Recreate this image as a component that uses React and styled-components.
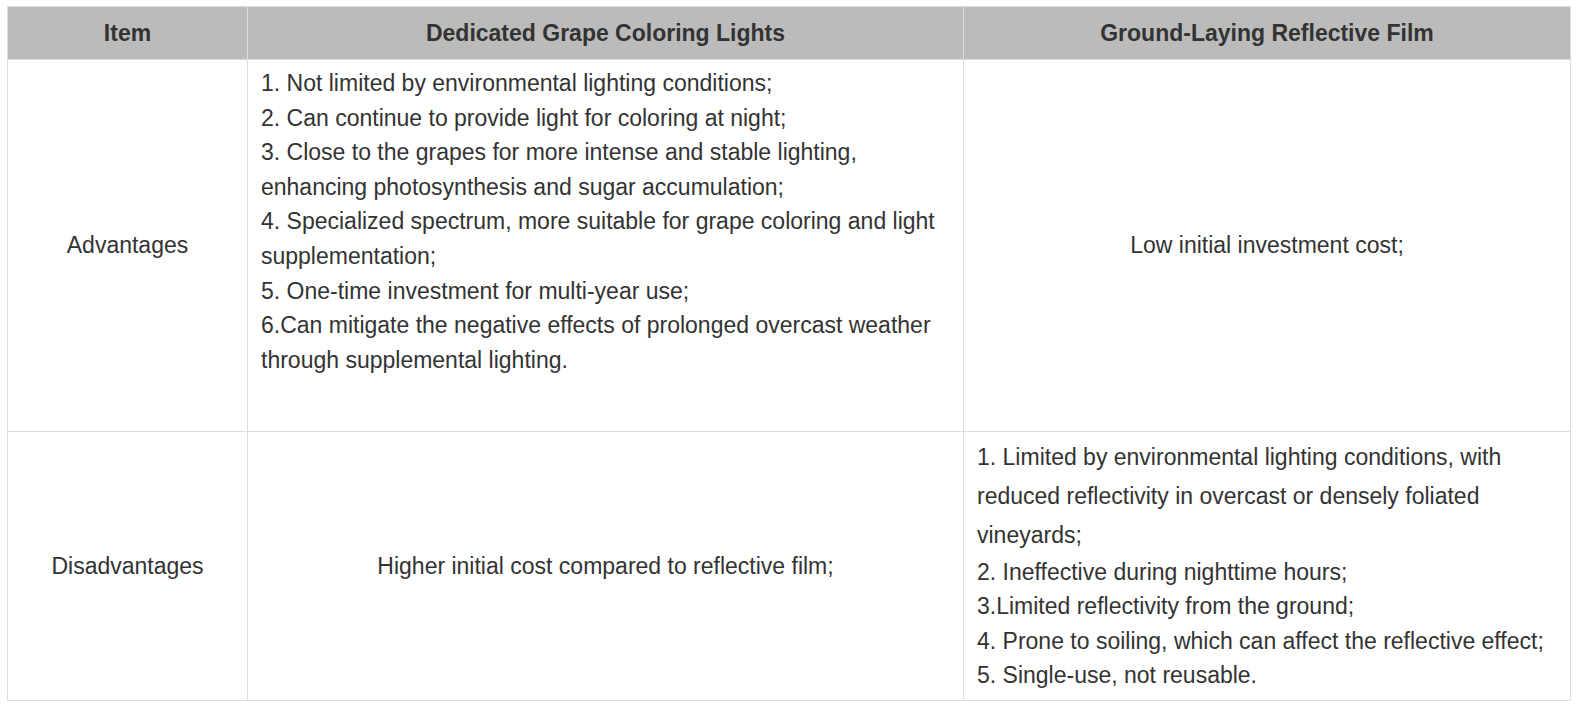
import styled, { createGlobalStyle } from 'styled-components';

const GlobalStyle = createGlobalStyle`
  body {
    margin: 0;
    padding: 6px 7px;
    background: #ffffff;
    font-family: "Liberation Sans", Arial, sans-serif;
    color: #333333;
  }
`;

const Table = styled.table`
  width: 1563px;
  border-collapse: collapse;
  table-layout: fixed;
  font-size: 23px;
`;

const HeadCell = styled.th`
  background: #bbbbbb;
  height: 52px;
  padding: 0 12px;
  font-weight: bold;
  text-align: center;
  border: 1px solid #dddddd;
  color: #333333;
`;

const Row = styled.tr`
  height: ${(p) => p.$height}px;
`;

const Cell = styled.td`
  border: 1px solid #dddddd;
  padding: ${(p) => (p.$list ? '6px 13px 7px' : '0 13px')};
  text-align: ${(p) => (p.$list ? 'left' : 'center')};
  vertical-align: ${(p) => (p.$top ? 'top' : 'middle')};
  line-height: 34.6px;
`;

const Para = styled.p`
  margin: 0;
  line-height: ${(p) => p.$lh || '34.6px'};
`;

function App() {
  return (
    <>
      <GlobalStyle />
      <Table>
        <colgroup>
          <col style={{ width: 240 }} />
          <col style={{ width: 716 }} />
          <col style={{ width: 607 }} />
        </colgroup>
        <thead>
          <tr>
            <HeadCell>Item</HeadCell>
            <HeadCell>Dedicated Grape Coloring Lights</HeadCell>
            <HeadCell>Ground-Laying Reflective Film</HeadCell>
          </tr>
        </thead>
        <tbody>
          <Row $height={372}>
            <Cell>Advantages</Cell>
            <Cell $list $top>
              <Para>1. Not limited by environmental lighting conditions;</Para>
              <Para>2. Can continue to provide light for coloring at night;</Para>
              <Para>3. Close to the grapes for more intense and stable lighting, enhancing photosynthesis and sugar accumulation;</Para>
              <Para>4. Specialized spectrum, more suitable for grape coloring and light supplementation;</Para>
              <Para>5. One-time investment for multi-year use;</Para>
              <Para>6.Can mitigate the negative effects of prolonged overcast weather through supplemental lighting.</Para>
            </Cell>
            <Cell>Low initial investment cost;</Cell>
          </Row>
          <Row $height={269}>
            <Cell>Disadvantages</Cell>
            <Cell>Higher initial cost compared to reflective film;</Cell>
            <Cell $list>
              <Para $lh="38.8px">1. Limited by environmental lighting conditions, with reduced reflectivity in overcast or densely foliated vineyards;</Para>
              <Para>2. Ineffective during nighttime hours;</Para>
              <Para>3.Limited reflectivity from the ground;</Para>
              <Para>4. Prone to soiling, which can affect the reflective effect;</Para>
              <Para>5. Single-use, not reusable.</Para>
            </Cell>
          </Row>
        </tbody>
      </Table>
    </>
  );
}

export default App;
